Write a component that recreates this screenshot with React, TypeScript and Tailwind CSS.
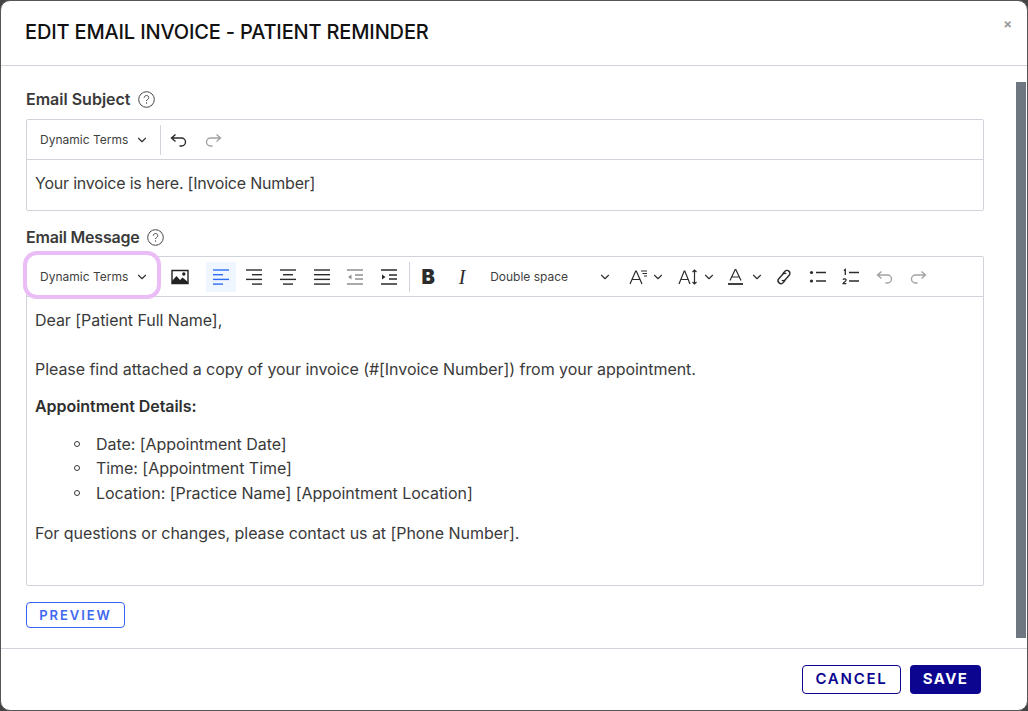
import { ReactNode } from "react";
import { ChevronDown } from "lucide-react";

const font = { fontFamily: "Inter, 'Liberation Sans', sans-serif" };

function Svg({ children, className = "" }: { children: ReactNode; className?: string }) {
  return (
    <svg width="20" height="20" viewBox="0 0 20 20" fill="none" stroke="currentColor" strokeWidth="1.4" className={className}>
      {children}
    </svg>
  );
}

function Help() {
  return (
    <svg width="17" height="17" viewBox="0 0 17 17" fill="none" stroke="#444" strokeWidth="1">
      <circle cx="8.5" cy="8.5" r="7.8" />
      <path d="M6.2 6.7c0-1.3 1.1-2.2 2.3-2.2s2.3.9 2.3 2.1c0 1.7-2.3 1.7-2.3 3.4" />
      <path d="M8.5 11.4v1.3" />
    </svg>
  );
}

function Undo({ muted }: { muted?: boolean }) {
  return (
    <Svg className={muted ? "text-[#a3a3a3]" : "text-[#2b2b2b]"}>
      <path d="M6.5 4.5 2.5 8l4 3.5M2.5 8h10a4 4 0 0 1 0 8h-2" />
    </Svg>
  );
}

function Redo({ muted }: { muted?: boolean }) {
  return (
    <Svg className={muted ? "text-[#a3a3a3]" : "text-[#2b2b2b]"}>
      <path d="M13.5 4.5 17.5 8l-4 3.5M17.5 8h-10a4 4 0 0 0 0 8h2" />
    </Svg>
  );
}

function Lines({ rows }: { rows: [number, number][] }) {
  return (
    <Svg>
      {rows.map(([a, b], i) => (
        <path key={i} d={`M${a} ${3 + i * 4.7}H${b}`} />
      ))}
    </Svg>
  );
}

function Tool({ children, active }: { children: ReactNode; active?: boolean }) {
  return (
    <span className={`flex h-[30px] w-[30px] shrink-0 items-center justify-center ${active ? "bg-[#eff6ff] text-[#2f6cf6]" : "text-[#2b2b2b]"}`}>
      {children}
    </span>
  );
}

function Caret() {
  return <ChevronDown size={14} strokeWidth={2} className="text-[#333]" />;
}

function Label({ children, tight }: { children: ReactNode; tight?: boolean }) {
  return (
    <div className={`flex items-center gap-[7px] text-base leading-5 font-semibold text-[#3a3a3a] ${tight ? "tracking-[-0.2px]" : ""}`}>
      {children}
      <Help />
    </div>
  );
}

function SubjectEditor() {
  return (
    <div className="mt-[10px] rounded-[2px] border border-[#d0d4da]">
      <div className="flex h-[40px] items-center border-b border-[#d0d4da]">
        <button className="flex w-[133px] items-center gap-[7px] pl-[13px] text-[12px] text-[#3f3f3f]">
          Dynamic Terms <Caret />
        </button>
        <span className="h-[30px] w-px bg-[#d0d4da]" />
        <span className="ml-[8px] flex items-center gap-[14px]">
          <Undo />
          <Redo muted />
        </span>
      </div>
      <div className="h-[50px] px-2 pt-[12px] text-base leading-[22px] tracking-[-0.21px] text-[#3a3a3a]">
        Your invoice is here. [Invoice Number]
      </div>
    </div>
  );
}

function MessageToolbar() {
  return (
    <div className="flex h-[40px] items-center border-b border-[#d0d4da]">
      <button className="-mt-[2px] flex h-[40px] w-[130px] shrink-0 items-center gap-[7px] self-start rounded-[10px] bg-white pt-[3px] pl-[13px] text-[12px] text-[#3f3f3f] ring-4 ring-[#eabdf6]">
        Dynamic Terms <Caret />
      </button>
      <div className="ml-[8px] flex items-center gap-[3.7px]">
        <Tool>
          <svg width="18" height="16" viewBox="0 0 18 16">
            <path fill="none" stroke="#222" strokeWidth="1.4" d="M1 1.5h16v13H1z" />
            <path fill="#222" d="M1 14.5V12l4.5-5 3.5 4 2.5-2.5L17 13v1.5z" />
            <circle cx="12.8" cy="5" r="1.7" fill="#222" />
          </svg>
        </Tool>
        <span className="ml-[7px]">
          <Tool active>
            <Lines rows={[[2, 18], [2, 12], [2, 18], [2, 12]]} />
          </Tool>
        </span>
        <Tool>
          <Lines rows={[[2, 18], [8, 18], [2, 18], [8, 18]]} />
        </Tool>
        <Tool>
          <Lines rows={[[2, 18], [5, 15], [2, 18], [5, 15]]} />
        </Tool>
        <Tool>
          <Lines rows={[[2, 18], [2, 18], [2, 18], [2, 18]]} />
        </Tool>
        <Tool>
          <Svg className="text-[#8f8f8f]">
            <path d="M2 3h16M10 8h8M10 12h8M2 17h16" />
            <path d="M6.5 7.5 3 10l3.5 2.5z" fill="currentColor" stroke="none" />
          </Svg>
        </Tool>
        <Tool>
          <Svg>
            <path d="M2 3h16M10 8h8M10 12h8M2 17h16" />
            <path d="M3 7.5 6.5 10 3 12.5z" fill="currentColor" stroke="none" />
          </Svg>
        </Tool>
      </div>
      <span className="ml-[5px] h-[30px] w-px bg-[#d0d4da]" />
      <span className="ml-[3px] flex items-center gap-[4px]">
        <Tool>
          <span className="text-[20px] leading-none font-black text-[#2b2b2b]">B</span>
        </Tool>
        <Tool>
          <span className="font-['Liberation_Serif',serif] text-[20px] leading-none text-[#2b2b2b] italic">I</span>
        </Tool>
      </span>
      <span className="ml-[13px] flex w-[123px] shrink-0 items-center justify-between pr-[1px] text-[12px] text-[#3f3f3f]">
        Double space <Caret />
      </span>
      <span className="ml-[16px] flex w-[36px] items-center justify-between">
        <svg width="20" height="18" viewBox="0 0 20 18" fill="none" stroke="#2b2b2b" strokeWidth="1.2">
          <path d="M1 16 6.7 3h.6L13 16M3.2 11.5h7.6M12 3h6M13.5 5.5H18M15 8h3" />
        </svg>
        <Caret />
      </span>
      <span className="ml-[13px] flex w-[38px] items-center justify-between">
        <svg width="20" height="18" viewBox="0 0 20 18" fill="none" stroke="#2b2b2b" strokeWidth="1.2">
          <path d="M1 16 6.2 3h.6L12 16M3 11.5h7.6M16.5 2v14M14.5 4l2-2 2 2M14.5 14l2 2 2-2" />
        </svg>
        <Caret />
      </span>
      <span className="ml-[11px] flex w-[37px] items-center justify-between">
        <svg width="17" height="18" viewBox="0 0 17 18" fill="none" stroke="#2b2b2b" strokeWidth="1.2">
          <path d="M3 12.5 8.2 1.5h.6L14 12.5M4.8 9h7.4" />
          <path d="M1 16h15" strokeWidth="1.8" />
        </svg>
        <Caret />
      </span>
      <span className="ml-[5px] flex items-center gap-[3.5px]">
        <Tool>
          <Svg>
            <path d="M8.8 6.8 10.8 4.4a2.9 2.9 0 0 1 4.4 3.8l-4 4.6c-1.2 1.3-2.7 1.2-3.3.4" />
            <path d="M11.2 13.2 9.2 15.6a2.9 2.9 0 0 1-4.4-3.8l4-4.6c1.2-1.3 2.7-1.2 3.3-.4" />
          </Svg>
        </Tool>
        <Tool>
          <Svg>
            <circle cx="3.5" cy="5.5" r="1.6" fill="currentColor" stroke="none" />
            <circle cx="3.5" cy="14" r="1.6" fill="currentColor" stroke="none" />
            <path d="M8 5.5h10M8 14h10" strokeWidth="1.6" />
          </Svg>
        </Tool>
        <Tool>
          <Svg>
            <path d="M2.8 3.5 4.3 2.5v5.5" strokeWidth="1.3" />
            <path d="M2 12.8c.5-1.3 3.2-1.1 3.2.3 0 1.1-2.9 2.1-3.2 3.6h3.4" strokeWidth="1.2" />
            <path d="M8 5.5h10M8 14h10" strokeWidth="1.6" />
          </Svg>
        </Tool>
        <Tool>
          <Undo muted />
        </Tool>
        <Tool>
          <Redo muted />
        </Tool>
      </span>
    </div>
  );
}

const items = [
  "Date: [Appointment Date]",
  "Time: [Appointment Time]",
  "Location: [Practice Name] [Appointment Location]",
];

function MessageEditor() {
  return (
    <div className="mt-[9px] rounded-[2px] border border-[#d0d4da]">
      <MessageToolbar />
      <div className="h-[288px] px-2 pt-[12px] text-base leading-[22px] tracking-[-0.05px] text-[#3a3a3a]">
        <p>Dear [Patient Full Name],</p>
        <p className="mt-[27px]">Please find attached a copy of your invoice (#[Invoice Number]) from your appointment.</p>
        <p className="mt-[15px] font-semibold text-[#2f2f2f]">Appointment Details:</p>
        <ul className="mt-[16px] pl-[39px]">
          {items.map((item, i) => (
            <li key={item} className={`flex items-start gap-[16px] ${i === 0 ? "h-[24px]" : "h-[25px]"}`}>
              <span className="mt-[8px] h-[6px] w-[6px] shrink-0 rounded-full border border-[#3a3a3a]" />
              {item}
            </li>
          ))}
        </ul>
        <p className="mt-[15px]">For questions or changes, please contact us at [Phone Number].</p>
      </div>
    </div>
  );
}

export default function App() {
  return (
    <div style={font} className="h-[711px] w-[1028px] overflow-hidden bg-[#444]">
      <div className="flex h-full flex-col overflow-hidden rounded-[10px] border border-[#555] bg-white">
        {/* header */}
        <div className="flex h-[65px] shrink-0 items-start justify-between border-b border-[#d0d4da] pl-[24px] pr-[15px]">
          <h2 className="pt-[20px] text-[20px] leading-[22px] font-medium tracking-[-0.16px] text-[#111]">
            EDIT EMAIL INVOICE - PATIENT REMINDER
          </h2>
          <span className="pt-[15px] text-[13px] leading-4 font-bold text-[#9a9a9a]">×</span>
        </div>

        {/* body */}
        <div className="flex min-h-0 flex-1">
          <div className="h-full flex-1 pl-[25px] pr-[32px] pt-[23px]">
            <Label>Email Subject</Label>
            <SubjectEditor />
            <div className="mt-[16px]">
              <Label tight>Email Message</Label>
            </div>
            <MessageEditor />
            <button className="mt-[16px] h-[26px] w-[99px] rounded-[4px] border border-[#3563f0] pt-px text-[13px] font-semibold tracking-[1.95px] text-[#4169f0]">
              PREVIEW
            </button>
          </div>
          <div className="mr-[1px] flex h-full w-[10px] shrink-0 flex-col pt-[16px] pb-[10px]">
            <div className="flex-1 bg-[#6e7680]" />
          </div>
        </div>

        {/* footer */}
        <div className="flex h-[62px] shrink-0 items-start justify-end gap-[9px] border-t border-[#d0d4da] pt-[16px] pr-[46px]">
          <button className="h-[29px] w-[99px] rounded-[4px] border border-[#0b0590] text-[15px] font-semibold tracking-[1.75px] text-[#0b0590]">
            CANCEL
          </button>
          <button className="h-[29px] w-[71px] rounded-[4px] bg-[#0b0590] text-[15px] font-bold tracking-[1.4px] text-white">
            SAVE
          </button>
        </div>
      </div>
    </div>
  );
}
